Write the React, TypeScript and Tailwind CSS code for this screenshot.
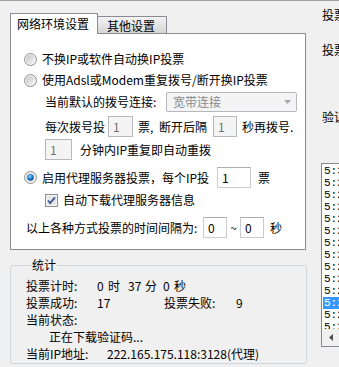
import React from 'react';

const font = "font-['Noto_Sans_CJK_SC',sans-serif] text-[12px] leading-[14px]";

const listRows = [
    '5:31:08', '5:29:57', '5:29:44', '5:29:30', '5:28:51', '5:28:36', '5:28:12',
    '5:27:59', '5:27:41', '5:26:33', '5:26:05', '5:25:48', '5:25:20', '5:24:57',
];

const Radio = ({ checked }: { checked?: boolean }) => (
    <svg width="13" height="13" viewBox="0 0 13 13" className="shrink-0">
        <defs>
            <linearGradient id="ringFill" x1="0" y1="0" x2="1" y2="1">
                <stop offset="0" stopColor="#c4c4c4" />
                <stop offset="1" stopColor="#f7f7f7" />
            </linearGradient>
            <radialGradient id="dotFill" cx="0.4" cy="0.35" r="0.7">
                <stop offset="0" stopColor="#9ad8ff" />
                <stop offset="0.45" stopColor="#2a8ad8" />
                <stop offset="1" stopColor="#0b3d78" />
            </radialGradient>
        </defs>
        <circle cx="6.5" cy="6.5" r="6" fill="#f2f2f2" stroke="#8e8f8f" />
        <circle cx="6.5" cy="6.5" r="4.5" fill="url(#ringFill)" />
        {checked && <circle cx="6.5" cy="6.5" r="3.2" fill="url(#dotFill)" />}
    </svg>
);

const Checkbox = () => (
    <svg width="13" height="13" viewBox="0 0 13 13" className="shrink-0">
        <rect x="0.5" y="0.5" width="12" height="12" fill="#f4f4f4" stroke="#8e8f8f" />
        <rect x="2" y="2" width="9" height="9" fill="#e6e6e6" />
        <path d="M3 6.5 L5.2 9 L10 3.3" fill="none" stroke="#3d5a96" strokeWidth="1.8" />
    </svg>
);

const Edit = ({ value, disabled, w }: { value: string; disabled?: boolean; w: string }) => (
    <div
        className={`${w} h-[21px] flex items-center pl-[4px] border ${
            disabled
                ? 'bg-[#f4f4f4] border-[#b5b8bd] text-[#707070]'
                : 'bg-white border-[#c9ccd2] border-t-[#abadb3] text-black'
        }`}
    >
        {value}
    </div>
);

const App: React.FC = () => {
    return (
        <div className={`${font} w-[339px] h-[367px] bg-[#f0f0f0] border-t border-[#a0a0a0] flex overflow-hidden text-black`}>
            {/* left column */}
            <div className="w-[306px] shrink-0 pl-[10px] flex flex-col">
                {/* tabs */}
                <div className="flex items-end h-[21px] mt-[12px]">
                    <div className="relative z-10 w-[88px] h-[21px] bg-white border border-b-0 border-[#898c95] pl-[6px] pt-[3px]">
                        网络环境设置
                    </div>
                    <div className="w-[70px] h-[18px] -ml-px border border-[#898c95] bg-gradient-to-b from-[#f3f3f3] to-[#d6d6d6] pl-[9px] pt-[2px]">
                        其他设置
                    </div>
                </div>

                {/* tab page */}
                <div className="-mt-px w-[296px] h-[217px] bg-white border border-[#898c95] flex flex-col">
                    <div className="flex items-center h-[16px] mt-[17px] pl-[13px] gap-[5px]">
                        <Radio />
                        <span>不换IP或软件自动换IP投票</span>
                    </div>
                    <div className="flex items-center h-[16px] mt-[5px] pl-[13px] gap-[5px]">
                        <Radio />
                        <span>使用Adsl或Modem重复拨号/断开换IP投票</span>
                    </div>
                    <div className="flex items-center h-[20px] mt-[4px] pl-[34px]">
                        <span className="w-[121px]">当前默认的拨号连接:</span>
                        <div className="w-[131px] h-[20px] flex items-center justify-between rounded-[2px] border border-[#b5b8bd] bg-[#f4f4f4] pl-[6px] pr-[5px] text-[#8a8a8a]">
                            <span>宽带连接</span>
                            <svg width="7" height="4" viewBox="0 0 7 4">
                                <path d="M0 0 H7 L3.5 4 Z" fill="#a7a7a7" />
                            </svg>
                        </div>
                    </div>
                    <div className="flex items-center h-[21px] mt-[4px] pl-[34px]">
                        <span className="w-[63px]">每次拨号投</span>
                        <Edit value="1" disabled w="w-[25px]" />
                        <span className="w-[21px] ml-[5px]">票,</span>
                        <span className="w-[54px]">断开后隔</span>
                        <Edit value="1" disabled w="w-[24px]" />
                        <span className="ml-[5px]">秒再拨号.</span>
                    </div>
                    <div className="flex items-center h-[21px] mt-[2px] pl-[34px]">
                        <Edit value="1" disabled w="w-[27px]" />
                        <span className="ml-[8px]">分钟内IP重复即自动重拨</span>
                    </div>
                    <div className="flex items-center h-[21px] mt-[7px] pl-[13px]">
                        <Radio checked />
                        <span className="w-[175px] ml-[5px]">启用代理服务器投票，每个IP投</span>
                        <Edit value="1" w="w-[34px]" />
                        <span className="ml-[7px]">票</span>
                    </div>
                    <div className="flex items-center h-[16px] mt-[4px] pl-[34px] gap-[5px]">
                        <Checkbox />
                        <span>自动下载代理服务器信息</span>
                    </div>
                    <div className="flex items-center h-[21px] mt-[9px] pl-[15px]">
                        <span className="w-[177px]">以上各种方式投票的时间间隔为:</span>
                        <Edit value="0" w="w-[24px]" />
                        <span className="w-[13px] text-center">~</span>
                        <Edit value="0" w="w-[24px]" />
                        <span className="ml-[6px]">秒</span>
                    </div>
                </div>

                {/* statistics group */}
                <fieldset className="mt-[8px] w-[297px] border border-[#d0d6da] rounded-[3px] pl-[15px] pb-[1px]">
                    <legend className="ml-[5px] px-[1px]">统计</legend>
                    <div className="mt-[5px] flex items-center h-[17px]">
                        <span className="w-[71px]">投票计时:</span>
                        <span className="w-[11px]">0</span>
                        <span className="w-[20px]">时</span>
                        <span className="w-[17px]">37</span>
                        <span className="w-[18px]">分</span>
                        <span className="w-[11px]">0</span>
                        <span>秒</span>
                    </div>
                    <div className="flex items-center h-[17px]">
                        <span className="w-[71px]">投票成功:</span>
                        <span className="w-[67px]">17</span>
                        <span className="w-[72px]">投票失败:</span>
                        <span>9</span>
                    </div>
                    <div className="flex items-center h-[17px]">当前状态:</div>
                    <div className="flex items-center h-[17px] pl-[23px]">正在下载验证码...</div>
                    <div className="flex items-center h-[17px]">
                        <span className="w-[81px]">当前IP地址:</span>
                        <span>222.165.175.118:3128(代理)</span>
                    </div>
                </fieldset>
            </div>

            {/* right column (cut off by the window edge) */}
            <div className="flex-1 min-w-0 overflow-hidden pl-[16px] flex flex-col whitespace-nowrap">
                <div className="mt-[7px]">投票网址</div>
                <div className="mt-[21px]">投票次数</div>
                <div className="mt-[53px]">验证码</div>
                <div className="mt-[39px] -ml-px w-[120px] h-[184px] border border-[#828790] bg-white flex flex-col">
                    <div className="flex-1 overflow-hidden pt-[1px] pl-[1px] font-['Liberation_Mono',monospace] text-[11px]">
                        {listRows.map((t, i) => (
                            <div
                                key={i}
                                className={`h-[12px] leading-[12px] pl-[1px] ${i === 11 ? 'bg-[#3399ff] text-white' : ''}`}
                            >
                                {t}
                            </div>
                        ))}
                    </div>
                    <div className="h-[17px] bg-[#e9e9e9] flex">
                        <div className="w-[17px] h-[17px] flex items-center justify-center bg-[#f0f0f0]">
                            <svg width="4" height="7" viewBox="0 0 4 7">
                                <path d="M4 0 V7 L0 3.5 Z" fill="#505050" />
                            </svg>
                        </div>
                    </div>
                </div>
            </div>
        </div>
    );
};

export default App;
